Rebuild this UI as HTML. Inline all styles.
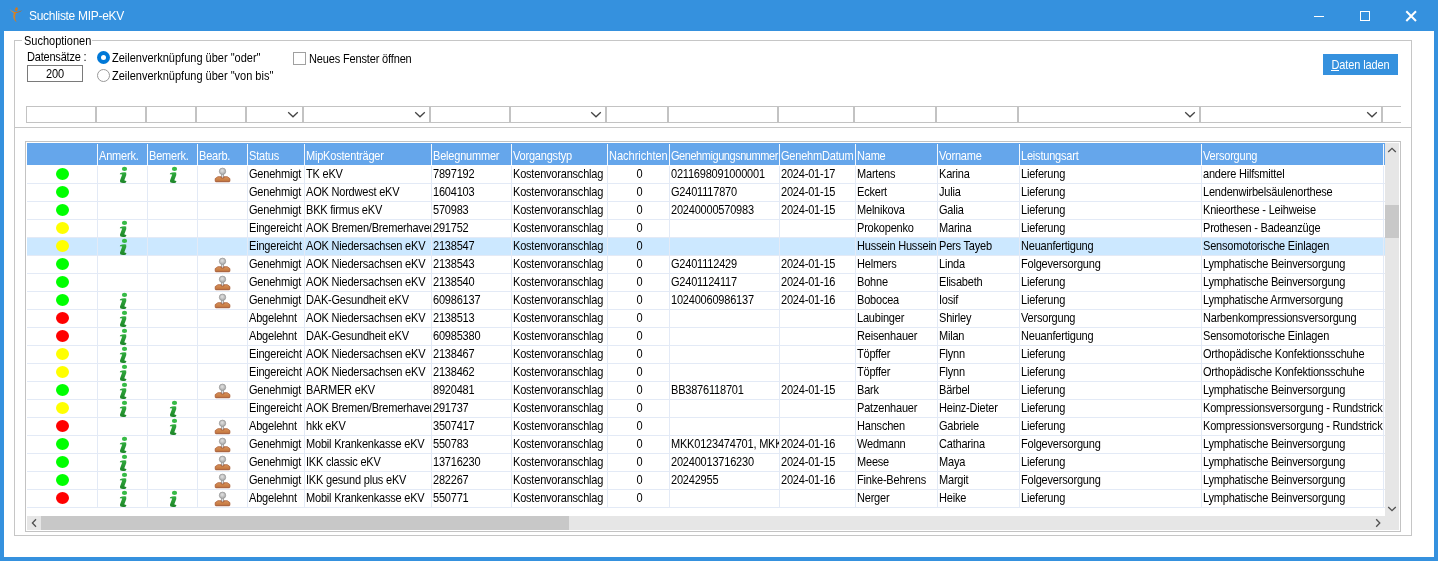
<!DOCTYPE html>
<html lang="de"><head><meta charset="utf-8"><title>Suchliste MIP-eKV</title>
<style>
html,body{margin:0;padding:0}
body{width:1438px;height:561px;overflow:hidden;background:#3591de;position:relative;
 font-family:"Liberation Sans",sans-serif;font-size:11px;letter-spacing:-0.2px;color:#000}
div,i,b,span,svg{box-sizing:border-box}
#all{position:absolute;left:0;top:0;width:1438px;height:561px;will-change:transform}
.abs{position:absolute}
#client{position:absolute;left:4px;top:31px;width:1430px;height:526px;background:#fff}
#title{position:absolute;left:29px;top:7px;height:18px;line-height:18px;font-size:12px;color:#fff;letter-spacing:-0.3px;white-space:nowrap}
#panel{position:absolute;left:14px;top:40px;width:1398px;height:496px;border:1px solid #c6c6c6}
#hline{position:absolute;left:14px;top:127px;width:1398px;height:1px;background:#c6c6c6}
#legend{position:absolute;left:22px;top:34px;width:70px;height:14px;line-height:14px;background:#fff;padding-left:2px;white-space:nowrap;letter-spacing:0}
#legend span,#num span,#btn span{display:block;height:14px;line-height:14px;transform:scaleY(1.125);transform-origin:0 11px}
#btn span{margin-top:4px}
#num span{margin-top:1px}
.lbl{position:absolute;white-space:nowrap;height:14px;line-height:14px;transform:scaleY(1.125);transform-origin:0 11px}
#num{position:absolute;left:27px;top:65px;width:56px;height:17px;border:1px solid #7a7a7a;background:#fff;text-align:center;line-height:15px}
.radio{position:absolute;width:13px;height:13px;border-radius:50%}
#r1{left:97px;top:51px;background:#0078d7}
#r1:after{content:"";position:absolute;left:4px;top:4px;width:5px;height:5px;border-radius:50%;background:#fff}
#r2{left:97px;top:69px;background:#fff;border:1px solid #999}
#chk{position:absolute;left:293px;top:52px;width:13px;height:13px;border:1px solid #a0a0a0;background:#fff}
#btn{position:absolute;left:1323px;top:54px;width:75px;height:21px;background:#3591de;color:#fff;text-align:center;line-height:23px;white-space:nowrap;letter-spacing:-0.1px}
#btn u{text-decoration:none}
#btnul{position:absolute;left:1331px;top:70px;width:8px;height:1px;background:#fff}
.fb{position:absolute;top:106px;height:17px;border:1px solid #c3c3c3;background:#fff}
.fb.last{border-right:none}
.chev{position:absolute;right:3px;top:5px;overflow:visible}
#gridbox{position:absolute;left:25px;top:141px;width:1376px;height:391px;border:1px solid #c3c3c3;background:#fff}
#ghead{position:absolute;left:27px;top:143px;width:1358px;height:22px;background:#65a6eb}
.hc{position:absolute;top:6px;height:14px;line-height:14px;color:#fff;overflow:hidden;white-space:nowrap;padding-left:1px;transform:scaleY(1.125);transform-origin:0 11px}
.hs{position:absolute;top:1px;width:1px;height:21px;background:#f4f8fd}
.row{position:absolute;left:27px;width:1358px;height:18px;border-bottom:1px solid #e3eaf6}
.row.sel{background:#cce8ff}
.c{position:absolute;top:0;height:17px;line-height:17px;overflow:hidden;white-space:nowrap;padding-left:1px;transform:scaleY(1.125);transform-origin:0 12px}
.c.ctr{text-align:center;padding-left:2px}
.dot{position:absolute;left:29px;top:2px;width:13px;height:12px;border-radius:50%}
.ii{position:absolute;top:0;width:16px;height:18px;overflow:visible}
.st{position:absolute;top:0;width:17px;height:18px;overflow:visible}
.vs{position:absolute;top:166px;width:1px;height:342px;background:#e3eaf6}
.sb{position:absolute;background:#e6e6e6}
.thumb{position:absolute;background:#c8c8c8}
</style></head>
<body>
<div id="all">
<svg width="0" height="0" style="position:absolute">
<defs>
<linearGradient id="gi" x1="0" y1="0" x2="0" y2="1"><stop offset="0" stop-color="#31ad3f"/><stop offset="1" stop-color="#1d8428"/></linearGradient>
<radialGradient id="gk" cx="0.45" cy="0.4" r="0.6"><stop offset="0" stop-color="#e2e2e2"/><stop offset="1" stop-color="#a9a9a9"/></radialGradient>
<linearGradient id="gb" x1="0" y1="0" x2="0" y2="1"><stop offset="0" stop-color="#d9935c"/><stop offset="0.75" stop-color="#c67a42"/><stop offset="1" stop-color="#8e4424"/></linearGradient>
<symbol id="sym-i" viewBox="0 0 16 18">
<ellipse cx="9.5" cy="2.9" rx="2.6" ry="2.1" fill="#36bb46"/>
<path d="M5 7.2 Q8 5.8 11.2 6.4 L11.3 9 L9.3 14.2 Q10 15 11.4 15 L11 16.4 Q7.5 17.6 5.2 16.2 L5 14.5 L7.2 8.6 Q6 8.2 4.9 8.4 Z" fill="url(#gi)"/>
</symbol>
<symbol id="sym-st" viewBox="0 0 17 18">
<rect x="7.2" y="7.8" width="2.7" height="4.4" fill="#8f8f8f"/>
<rect x="7.9" y="7.8" width="1.3" height="4.4" fill="#dcdcdc"/>
<circle cx="8.5" cy="5.3" r="3.2" fill="url(#gk)" stroke="#949494" stroke-width="0.7"/>
<path d="M3.9 10.7 L7.2 10.7 L7.2 12 L9.9 12 L9.9 10.7 L13.3 10.7 L15.9 12.6 L15.9 15 Q15.9 15.8 15.1 15.8 L2 15.8 Q1.2 15.8 1.2 15 L1.2 12.6 Z" fill="url(#gb)" stroke="#a3522a" stroke-width="0.7"/>
</symbol>
</defs>
</svg>
<svg class="abs" style="left:8px;top:5px" width="17" height="20" viewBox="8 5 17 20">
<defs><linearGradient id="gf" x1="0" y1="0" x2="1" y2="0"><stop offset="0" stop-color="#e39a45"/><stop offset="0.5" stop-color="#cf7a20"/><stop offset="1" stop-color="#b4621a"/></linearGradient></defs>
<ellipse cx="16.4" cy="9.2" rx="1.35" ry="1.95" fill="#cf7a20" transform="rotate(18 16.4 9.2)"/>
<path d="M9.6 9.1 Q11.4 11.2 14.4 11.9 Q18.4 12.2 22.4 10.3 Q19.6 13 16 13.3 Q14.6 16.5 15.3 19 Q15.8 20.8 16.8 22.2 Q14.5 21 13.6 18.5 Q12.8 15.6 13.8 13.2 Q11 12 9.6 9.1 Z" fill="url(#gf)"/>
</svg>
<div id="title">Suchliste MIP-eKV</div>
<svg class="abs" style="left:1300px;top:0" width="134" height="31" viewBox="1300 0 134 31">
<rect x="1314" y="16" width="10" height="1" fill="#fff"/>
<rect x="1360.5" y="11.5" width="9" height="9" fill="none" stroke="#fff" stroke-width="1"/>
<path d="M1406.3 11.3 L1416 21 M1416 11.3 L1406.3 21" stroke="#fff" stroke-width="2" fill="none"/>
</svg>
<div id="client"></div>
<div id="panel"></div>
<div id="hline"></div>
<div id="legend"><span>Suchoptionen</span></div>
<div class="lbl" style="left:27px;top:50px">Datensätze :</div>
<div id="num"><span>200</span></div>
<div class="radio" id="r1"></div>
<div class="lbl" style="left:112px;top:51px;letter-spacing:0">Zeilenverknüpfung über "oder"</div>
<div class="radio" id="r2"></div>
<div class="lbl" style="left:112px;top:69px;letter-spacing:0">Zeilenverknüpfung über "von bis"</div>
<div id="chk"></div>
<div class="lbl" style="left:309px;top:52px;letter-spacing:-0.15px">Neues Fenster öffnen</div>
<div id="btn"><span><u>D</u>aten laden</span></div><div id="btnul"></div>
<div id="filters">
<div class="fb" style="left:26px;width:70px"></div>
<div class="fb" style="left:96px;width:50px"></div>
<div class="fb" style="left:146px;width:50px"></div>
<div class="fb" style="left:196px;width:50px"></div>
<div class="fb" style="left:246px;width:57px"><svg class="chev" width="12" height="7" viewBox="0 0 12 7"><path d="M1.2 0.2 L6 4.8 L10.8 0.2" fill="none" stroke="#444" stroke-width="1.3"/></svg></div>
<div class="fb" style="left:303px;width:127px"><svg class="chev" width="12" height="7" viewBox="0 0 12 7"><path d="M1.2 0.2 L6 4.8 L10.8 0.2" fill="none" stroke="#444" stroke-width="1.3"/></svg></div>
<div class="fb" style="left:430px;width:80px"></div>
<div class="fb" style="left:510px;width:96px"><svg class="chev" width="12" height="7" viewBox="0 0 12 7"><path d="M1.2 0.2 L6 4.8 L10.8 0.2" fill="none" stroke="#444" stroke-width="1.3"/></svg></div>
<div class="fb" style="left:606px;width:62px"></div>
<div class="fb" style="left:668px;width:110px"></div>
<div class="fb" style="left:778px;width:76px"></div>
<div class="fb" style="left:854px;width:82px"></div>
<div class="fb" style="left:936px;width:82px"></div>
<div class="fb" style="left:1018px;width:182px"><svg class="chev" width="12" height="7" viewBox="0 0 12 7"><path d="M1.2 0.2 L6 4.8 L10.8 0.2" fill="none" stroke="#444" stroke-width="1.3"/></svg></div>
<div class="fb" style="left:1200px;width:182px"><svg class="chev" width="12" height="7" viewBox="0 0 12 7"><path d="M1.2 0.2 L6 4.8 L10.8 0.2" fill="none" stroke="#444" stroke-width="1.3"/></svg></div>
<div class="fb last" style="left:1382px;width:19px"></div>
</div>
<div id="gridbox"></div>
<div id="ghead">
<div class="hc" style="left:71px;width:49px">Anmerk.</div>
<div class="hc" style="left:121px;width:49px">Bemerk.</div>
<div class="hc" style="left:171px;width:49px">Bearb.</div>
<div class="hc" style="left:221px;width:56px">Status</div>
<div class="hc" style="left:278px;width:126px">MipKostenträger</div>
<div class="hc" style="left:405px;width:79px">Belegnummer</div>
<div class="hc" style="left:485px;width:95px">Vorgangstyp</div>
<div class="hc" style="left:581px;width:61px;letter-spacing:0">Nachrichten</div>
<div class="hc" style="left:643px;width:109px;letter-spacing:-0.45px">Genehmigungsnummer</div>
<div class="hc" style="left:753px;width:75px">GenehmDatum</div>
<div class="hc" style="left:829px;width:81px">Name</div>
<div class="hc" style="left:911px;width:81px">Vorname</div>
<div class="hc" style="left:993px;width:181px">Leistungsart</div>
<div class="hc" style="left:1175px;width:181px">Versorgung</div>
<i class="hs" style="left:70px"></i>
<i class="hs" style="left:120px"></i>
<i class="hs" style="left:170px"></i>
<i class="hs" style="left:220px"></i>
<i class="hs" style="left:277px"></i>
<i class="hs" style="left:404px"></i>
<i class="hs" style="left:484px"></i>
<i class="hs" style="left:580px"></i>
<i class="hs" style="left:642px"></i>
<i class="hs" style="left:752px"></i>
<i class="hs" style="left:828px"></i>
<i class="hs" style="left:910px"></i>
<i class="hs" style="left:992px"></i>
<i class="hs" style="left:1174px"></i>
<i class="hs" style="left:1356px"></i>
</div>
<div class="row" style="top:166px"><b class="dot" style="background:#00ff00"></b><svg class="ii" style="left:88px"><use href="#sym-i"/></svg><svg class="ii" style="left:138px"><use href="#sym-i"/></svg><svg class="st" style="left:187px"><use href="#sym-st"/></svg><div class="c" style="left:221px;width:56px">Genehmigt</div><div class="c" style="left:278px;width:126px">TK eKV</div><div class="c" style="left:405px;width:79px">7897192</div><div class="c" style="left:485px;width:95px">Kostenvoranschlag</div><div class="c ctr" style="left:581px;width:61px">0</div><div class="c" style="left:643px;width:109px">0211698091000001</div><div class="c" style="left:753px;width:75px">2024-01-17</div><div class="c" style="left:829px;width:81px">Martens</div><div class="c" style="left:911px;width:81px">Karina</div><div class="c" style="left:993px;width:181px">Lieferung</div><div class="c" style="left:1175px;width:181px">andere Hilfsmittel</div></div>
<div class="row" style="top:184px"><b class="dot" style="background:#00ff00"></b><div class="c" style="left:221px;width:56px">Genehmigt</div><div class="c" style="left:278px;width:126px">AOK Nordwest eKV</div><div class="c" style="left:405px;width:79px">1604103</div><div class="c" style="left:485px;width:95px">Kostenvoranschlag</div><div class="c ctr" style="left:581px;width:61px">0</div><div class="c" style="left:643px;width:109px">G2401117870</div><div class="c" style="left:753px;width:75px">2024-01-15</div><div class="c" style="left:829px;width:81px">Eckert</div><div class="c" style="left:911px;width:81px">Julia</div><div class="c" style="left:993px;width:181px">Lieferung</div><div class="c" style="left:1175px;width:181px">Lendenwirbelsäulenorthese</div></div>
<div class="row" style="top:202px"><b class="dot" style="background:#00ff00"></b><div class="c" style="left:221px;width:56px">Genehmigt</div><div class="c" style="left:278px;width:126px">BKK firmus eKV</div><div class="c" style="left:405px;width:79px">570983</div><div class="c" style="left:485px;width:95px">Kostenvoranschlag</div><div class="c ctr" style="left:581px;width:61px">0</div><div class="c" style="left:643px;width:109px">20240000570983</div><div class="c" style="left:753px;width:75px">2024-01-15</div><div class="c" style="left:829px;width:81px">Melnikova</div><div class="c" style="left:911px;width:81px">Galia</div><div class="c" style="left:993px;width:181px">Lieferung</div><div class="c" style="left:1175px;width:181px">Knieorthese - Leihweise</div></div>
<div class="row" style="top:220px"><b class="dot" style="background:#ffff00"></b><svg class="ii" style="left:88px"><use href="#sym-i"/></svg><div class="c" style="left:221px;width:56px">Eingereicht</div><div class="c" style="left:278px;width:126px">AOK Bremen/Bremerhaven</div><div class="c" style="left:405px;width:79px">291752</div><div class="c" style="left:485px;width:95px">Kostenvoranschlag</div><div class="c ctr" style="left:581px;width:61px">0</div><div class="c" style="left:829px;width:81px">Prokopenko</div><div class="c" style="left:911px;width:81px">Marina</div><div class="c" style="left:993px;width:181px">Lieferung</div><div class="c" style="left:1175px;width:181px">Prothesen - Badeanzüge</div></div>
<div class="row sel" style="top:238px"><b class="dot" style="background:#ffff00"></b><svg class="ii" style="left:88px"><use href="#sym-i"/></svg><div class="c" style="left:221px;width:56px">Eingereicht</div><div class="c" style="left:278px;width:126px">AOK Niedersachsen eKV</div><div class="c" style="left:405px;width:79px">2138547</div><div class="c" style="left:485px;width:95px">Kostenvoranschlag</div><div class="c ctr" style="left:581px;width:61px">0</div><div class="c" style="left:829px;width:81px">Hussein Hussein</div><div class="c" style="left:911px;width:81px">Pers Tayeb</div><div class="c" style="left:993px;width:181px">Neuanfertigung</div><div class="c" style="left:1175px;width:181px">Sensomotorische Einlagen</div></div>
<div class="row" style="top:256px"><b class="dot" style="background:#00ff00"></b><svg class="st" style="left:187px"><use href="#sym-st"/></svg><div class="c" style="left:221px;width:56px">Genehmigt</div><div class="c" style="left:278px;width:126px">AOK Niedersachsen eKV</div><div class="c" style="left:405px;width:79px">2138543</div><div class="c" style="left:485px;width:95px">Kostenvoranschlag</div><div class="c ctr" style="left:581px;width:61px">0</div><div class="c" style="left:643px;width:109px">G2401112429</div><div class="c" style="left:753px;width:75px">2024-01-15</div><div class="c" style="left:829px;width:81px">Helmers</div><div class="c" style="left:911px;width:81px">Linda</div><div class="c" style="left:993px;width:181px">Folgeversorgung</div><div class="c" style="left:1175px;width:181px">Lymphatische Beinversorgung</div></div>
<div class="row" style="top:274px"><b class="dot" style="background:#00ff00"></b><svg class="st" style="left:187px"><use href="#sym-st"/></svg><div class="c" style="left:221px;width:56px">Genehmigt</div><div class="c" style="left:278px;width:126px">AOK Niedersachsen eKV</div><div class="c" style="left:405px;width:79px">2138540</div><div class="c" style="left:485px;width:95px">Kostenvoranschlag</div><div class="c ctr" style="left:581px;width:61px">0</div><div class="c" style="left:643px;width:109px">G2401124117</div><div class="c" style="left:753px;width:75px">2024-01-16</div><div class="c" style="left:829px;width:81px">Bohne</div><div class="c" style="left:911px;width:81px">Elisabeth</div><div class="c" style="left:993px;width:181px">Lieferung</div><div class="c" style="left:1175px;width:181px">Lymphatische Beinversorgung</div></div>
<div class="row" style="top:292px"><b class="dot" style="background:#00ff00"></b><svg class="ii" style="left:88px"><use href="#sym-i"/></svg><svg class="st" style="left:187px"><use href="#sym-st"/></svg><div class="c" style="left:221px;width:56px">Genehmigt</div><div class="c" style="left:278px;width:126px">DAK-Gesundheit eKV</div><div class="c" style="left:405px;width:79px">60986137</div><div class="c" style="left:485px;width:95px">Kostenvoranschlag</div><div class="c ctr" style="left:581px;width:61px">0</div><div class="c" style="left:643px;width:109px">10240060986137</div><div class="c" style="left:753px;width:75px">2024-01-16</div><div class="c" style="left:829px;width:81px">Bobocea</div><div class="c" style="left:911px;width:81px">Iosif</div><div class="c" style="left:993px;width:181px">Lieferung</div><div class="c" style="left:1175px;width:181px">Lymphatische Armversorgung</div></div>
<div class="row" style="top:310px"><b class="dot" style="background:#ff0000"></b><svg class="ii" style="left:88px"><use href="#sym-i"/></svg><div class="c" style="left:221px;width:56px">Abgelehnt</div><div class="c" style="left:278px;width:126px">AOK Niedersachsen eKV</div><div class="c" style="left:405px;width:79px">2138513</div><div class="c" style="left:485px;width:95px">Kostenvoranschlag</div><div class="c ctr" style="left:581px;width:61px">0</div><div class="c" style="left:829px;width:81px">Laubinger</div><div class="c" style="left:911px;width:81px">Shirley</div><div class="c" style="left:993px;width:181px">Versorgung</div><div class="c" style="left:1175px;width:181px">Narbenkompressionsversorgung</div></div>
<div class="row" style="top:328px"><b class="dot" style="background:#ff0000"></b><svg class="ii" style="left:88px"><use href="#sym-i"/></svg><div class="c" style="left:221px;width:56px">Abgelehnt</div><div class="c" style="left:278px;width:126px">DAK-Gesundheit eKV</div><div class="c" style="left:405px;width:79px">60985380</div><div class="c" style="left:485px;width:95px">Kostenvoranschlag</div><div class="c ctr" style="left:581px;width:61px">0</div><div class="c" style="left:829px;width:81px">Reisenhauer</div><div class="c" style="left:911px;width:81px">Milan</div><div class="c" style="left:993px;width:181px">Neuanfertigung</div><div class="c" style="left:1175px;width:181px">Sensomotorische Einlagen</div></div>
<div class="row" style="top:346px"><b class="dot" style="background:#ffff00"></b><svg class="ii" style="left:88px"><use href="#sym-i"/></svg><div class="c" style="left:221px;width:56px">Eingereicht</div><div class="c" style="left:278px;width:126px">AOK Niedersachsen eKV</div><div class="c" style="left:405px;width:79px">2138467</div><div class="c" style="left:485px;width:95px">Kostenvoranschlag</div><div class="c ctr" style="left:581px;width:61px">0</div><div class="c" style="left:829px;width:81px">Töpffer</div><div class="c" style="left:911px;width:81px">Flynn</div><div class="c" style="left:993px;width:181px">Lieferung</div><div class="c" style="left:1175px;width:181px">Orthopädische Konfektionsschuhe</div></div>
<div class="row" style="top:364px"><b class="dot" style="background:#ffff00"></b><svg class="ii" style="left:88px"><use href="#sym-i"/></svg><div class="c" style="left:221px;width:56px">Eingereicht</div><div class="c" style="left:278px;width:126px">AOK Niedersachsen eKV</div><div class="c" style="left:405px;width:79px">2138462</div><div class="c" style="left:485px;width:95px">Kostenvoranschlag</div><div class="c ctr" style="left:581px;width:61px">0</div><div class="c" style="left:829px;width:81px">Töpffer</div><div class="c" style="left:911px;width:81px">Flynn</div><div class="c" style="left:993px;width:181px">Lieferung</div><div class="c" style="left:1175px;width:181px">Orthopädische Konfektionsschuhe</div></div>
<div class="row" style="top:382px"><b class="dot" style="background:#00ff00"></b><svg class="ii" style="left:88px"><use href="#sym-i"/></svg><svg class="st" style="left:187px"><use href="#sym-st"/></svg><div class="c" style="left:221px;width:56px">Genehmigt</div><div class="c" style="left:278px;width:126px">BARMER eKV</div><div class="c" style="left:405px;width:79px">8920481</div><div class="c" style="left:485px;width:95px">Kostenvoranschlag</div><div class="c ctr" style="left:581px;width:61px">0</div><div class="c" style="left:643px;width:109px">BB3876118701</div><div class="c" style="left:753px;width:75px">2024-01-15</div><div class="c" style="left:829px;width:81px">Bark</div><div class="c" style="left:911px;width:81px">Bärbel</div><div class="c" style="left:993px;width:181px">Lieferung</div><div class="c" style="left:1175px;width:181px">Lymphatische Beinversorgung</div></div>
<div class="row" style="top:400px"><b class="dot" style="background:#ffff00"></b><svg class="ii" style="left:88px"><use href="#sym-i"/></svg><svg class="ii" style="left:138px"><use href="#sym-i"/></svg><div class="c" style="left:221px;width:56px">Eingereicht</div><div class="c" style="left:278px;width:126px">AOK Bremen/Bremerhaven</div><div class="c" style="left:405px;width:79px">291737</div><div class="c" style="left:485px;width:95px">Kostenvoranschlag</div><div class="c ctr" style="left:581px;width:61px">0</div><div class="c" style="left:829px;width:81px">Patzenhauer</div><div class="c" style="left:911px;width:81px">Heinz-Dieter</div><div class="c" style="left:993px;width:181px">Lieferung</div><div class="c" style="left:1175px;width:181px">Kompressionsversorgung - Rundstrick</div></div>
<div class="row" style="top:418px"><b class="dot" style="background:#ff0000"></b><svg class="ii" style="left:138px"><use href="#sym-i"/></svg><svg class="st" style="left:187px"><use href="#sym-st"/></svg><div class="c" style="left:221px;width:56px">Abgelehnt</div><div class="c" style="left:278px;width:126px">hkk eKV</div><div class="c" style="left:405px;width:79px">3507417</div><div class="c" style="left:485px;width:95px">Kostenvoranschlag</div><div class="c ctr" style="left:581px;width:61px">0</div><div class="c" style="left:829px;width:81px">Hanschen</div><div class="c" style="left:911px;width:81px">Gabriele</div><div class="c" style="left:993px;width:181px">Lieferung</div><div class="c" style="left:1175px;width:181px">Kompressionsversorgung - Rundstrick</div></div>
<div class="row" style="top:436px"><b class="dot" style="background:#00ff00"></b><svg class="ii" style="left:88px"><use href="#sym-i"/></svg><svg class="st" style="left:187px"><use href="#sym-st"/></svg><div class="c" style="left:221px;width:56px">Genehmigt</div><div class="c" style="left:278px;width:126px">Mobil Krankenkasse eKV</div><div class="c" style="left:405px;width:79px">550783</div><div class="c" style="left:485px;width:95px">Kostenvoranschlag</div><div class="c ctr" style="left:581px;width:61px">0</div><div class="c" style="left:643px;width:109px">MKK0123474701, MKK0123474702</div><div class="c" style="left:753px;width:75px">2024-01-16</div><div class="c" style="left:829px;width:81px">Wedmann</div><div class="c" style="left:911px;width:81px">Catharina</div><div class="c" style="left:993px;width:181px">Folgeversorgung</div><div class="c" style="left:1175px;width:181px">Lymphatische Beinversorgung</div></div>
<div class="row" style="top:454px"><b class="dot" style="background:#00ff00"></b><svg class="ii" style="left:88px"><use href="#sym-i"/></svg><svg class="st" style="left:187px"><use href="#sym-st"/></svg><div class="c" style="left:221px;width:56px">Genehmigt</div><div class="c" style="left:278px;width:126px">IKK classic eKV</div><div class="c" style="left:405px;width:79px">13716230</div><div class="c" style="left:485px;width:95px">Kostenvoranschlag</div><div class="c ctr" style="left:581px;width:61px">0</div><div class="c" style="left:643px;width:109px">20240013716230</div><div class="c" style="left:753px;width:75px">2024-01-15</div><div class="c" style="left:829px;width:81px">Meese</div><div class="c" style="left:911px;width:81px">Maya</div><div class="c" style="left:993px;width:181px">Lieferung</div><div class="c" style="left:1175px;width:181px">Lymphatische Beinversorgung</div></div>
<div class="row" style="top:472px"><b class="dot" style="background:#00ff00"></b><svg class="ii" style="left:88px"><use href="#sym-i"/></svg><svg class="st" style="left:187px"><use href="#sym-st"/></svg><div class="c" style="left:221px;width:56px">Genehmigt</div><div class="c" style="left:278px;width:126px">IKK gesund plus eKV</div><div class="c" style="left:405px;width:79px">282267</div><div class="c" style="left:485px;width:95px">Kostenvoranschlag</div><div class="c ctr" style="left:581px;width:61px">0</div><div class="c" style="left:643px;width:109px">20242955</div><div class="c" style="left:753px;width:75px">2024-01-16</div><div class="c" style="left:829px;width:81px">Finke-Behrens</div><div class="c" style="left:911px;width:81px">Margit</div><div class="c" style="left:993px;width:181px">Folgeversorgung</div><div class="c" style="left:1175px;width:181px">Lymphatische Beinversorgung</div></div>
<div class="row" style="top:490px"><b class="dot" style="background:#ff0000"></b><svg class="ii" style="left:88px"><use href="#sym-i"/></svg><svg class="ii" style="left:138px"><use href="#sym-i"/></svg><svg class="st" style="left:187px"><use href="#sym-st"/></svg><div class="c" style="left:221px;width:56px">Abgelehnt</div><div class="c" style="left:278px;width:126px">Mobil Krankenkasse eKV</div><div class="c" style="left:405px;width:79px">550771</div><div class="c" style="left:485px;width:95px">Kostenvoranschlag</div><div class="c ctr" style="left:581px;width:61px">0</div><div class="c" style="left:829px;width:81px">Nerger</div><div class="c" style="left:911px;width:81px">Heike</div><div class="c" style="left:993px;width:181px">Lieferung</div><div class="c" style="left:1175px;width:181px">Lymphatische Beinversorgung</div></div>
<i class="vs" style="left:97px"></i>
<i class="vs" style="left:147px"></i>
<i class="vs" style="left:197px"></i>
<i class="vs" style="left:247px"></i>
<i class="vs" style="left:304px"></i>
<i class="vs" style="left:431px"></i>
<i class="vs" style="left:511px"></i>
<i class="vs" style="left:607px"></i>
<i class="vs" style="left:669px"></i>
<i class="vs" style="left:779px"></i>
<i class="vs" style="left:855px"></i>
<i class="vs" style="left:937px"></i>
<i class="vs" style="left:1019px"></i>
<i class="vs" style="left:1201px"></i>
<i class="vs" style="left:1383px"></i>
<div class="sb" style="left:1385px;top:143px;width:14px;height:387px"></div>
<div class="sb" style="left:27px;top:516px;width:1372px;height:14px"></div>
<div class="thumb" style="left:1385px;top:205px;width:14px;height:33px"></div>
<div class="thumb" style="left:41px;top:516px;width:528px;height:14px"></div>
<svg class="abs" style="left:0;top:140px" width="1438" height="400" viewBox="0 140 1438 400" fill="none" stroke="#505050" stroke-width="1.3">
<path d="M1388.2 152 L1392 148.4 L1395.8 152"/>
<path d="M1388.2 507 L1392 510.6 L1395.8 507"/>
<path d="M36 519.2 L32.4 523 L36 526.8"/>
<path d="M1376.2 519.2 L1379.8 523 L1376.2 526.8"/>
</svg>
</div>
</body></html>
